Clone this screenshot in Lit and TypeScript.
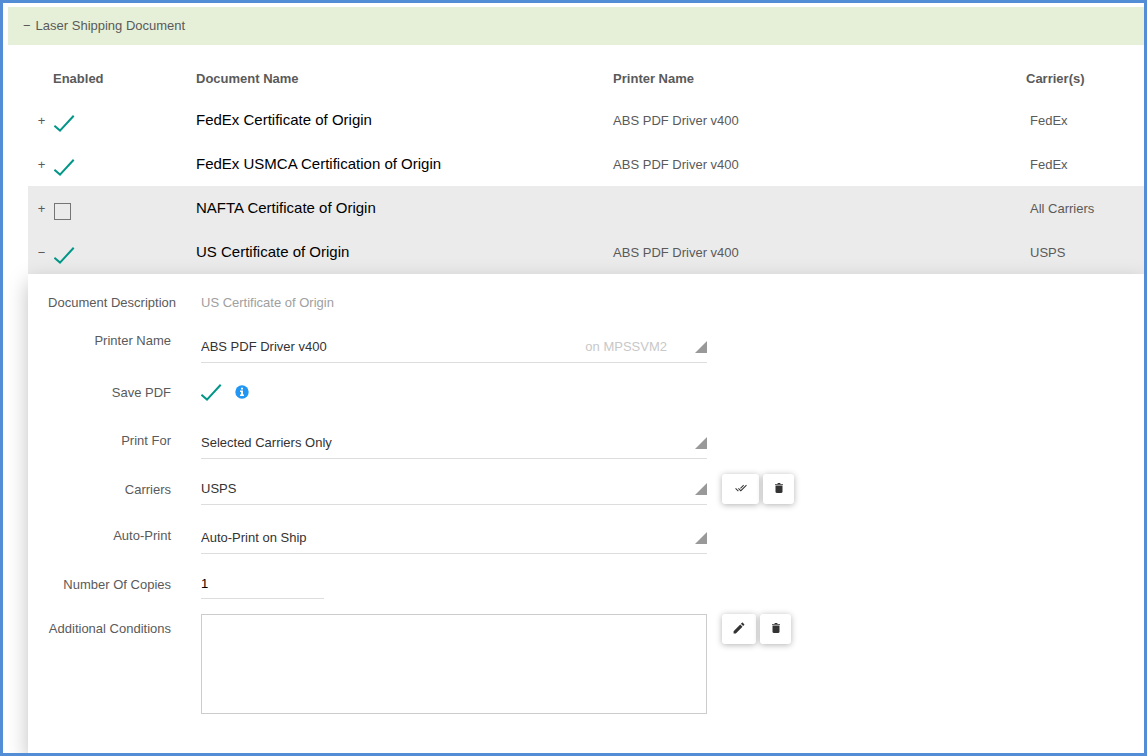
import { LitElement, html, css, svg, nothing } from "lit";
import { customElement, state } from "lit/decorators.js";

interface ShippingDocument {
  name: string;
  printer: string;
  carriers: string;
  enabled: boolean;
  shaded: boolean;
}

const DOCUMENTS: ShippingDocument[] = [
  { name: "FedEx Certificate of Origin", printer: "ABS PDF Driver v400", carriers: "FedEx", enabled: true, shaded: false },
  { name: "FedEx USMCA Certification of Origin", printer: "ABS PDF Driver v400", carriers: "FedEx", enabled: true, shaded: false },
  { name: "NAFTA Certificate of Origin", printer: "", carriers: "All Carriers", enabled: false, shaded: true },
  { name: "US Certificate of Origin", printer: "ABS PDF Driver v400", carriers: "USPS", enabled: true, shaded: true },
];

const trashIcon = svg`<svg class="icon" viewBox="0 0 12 12" aria-hidden="true"><path d="M2 1.900h2.200L5 1h2l.8.9H10v.9H2zM2.500 3.600h7v6.200c0 .7-.5 1.200-1.200 1.200H3.700c-.7 0-1.200-.5-1.200-1.200z"/></svg>`;
const pencilIcon = svg`<svg class="icon" viewBox="2 2 20 20" aria-hidden="true"><path d="M3 17.250V21h3.750L17.810 9.940l-3.750-3.750L3 17.250zM20.710 7.040c.39-.39.39-1.020 0-1.410l-2.340-2.340c-.39-.39-1.020-.39-1.410 0l-1.830 1.830 3.750 3.750 1.830-1.830z"/></svg>`;
const doubleCheckIcon = svg`<svg class="icon" viewBox="0 0 24 24" aria-hidden="true"><path d="M18 7l-1.410-1.410-6.340 6.340 1.410 1.410L18 7zm4.240-1.410L11.660 16.170 7.480 12l-1.410 1.410L11.660 19l12-12-1.420-1.410zM.41 13.410L6 19l1.410-1.410L1.830 12 .41 13.410z"/></svg>`;
const infoIcon = svg`<svg class="info" viewBox="0 0 14 14" role="img" aria-label="Information"><circle cx="7" cy="7" r="6.700" fill="#2196f3"/><path fill="#fff" d="M6 2.700h2v1.800H6zM5 5.600h3v3.900h1V11H5V9.500h1V7H5z"/></svg>`;

@customElement("app-root")
export class AppRoot extends LitElement {
  @state() private openIndex = 3;

  static styles = css`
    :host {
      display: flex;
      flex-direction: column;
      box-sizing: border-box;
      min-height: 100vh;
      padding: 4px 0 0 5px;
      border: 3px solid #538dd5;
      overflow: hidden;
      background: #fff;
      color: #5a5a5a;
      font: 13px/20px "Liberation Sans", Arial, sans-serif;
    }
    button, input, select, textarea {
      box-sizing: border-box;
      margin: 0;
      font: inherit;
      color: inherit;
    }
    .group {
      display: flex;
      align-items: center;
      gap: 5px;
      height: 38px;
      padding: 0 15px;
      border: 0;
      background: #e6f0d8;
      text-align: left;
    }
    .content {
      display: flex;
      flex: 1;
      flex-direction: column;
      margin-left: 20px;
    }
    .documents {
      width: 100%;
      table-layout: fixed;
      border-collapse: collapse;
    }
    .col-enabled { width: 168px; }
    .col-printer { width: 37%; }
    .col-carriers { width: 118px; }
    th {
      height: 38px;
      padding: 15px 0 0;
      text-align: left;
      font-weight: bold;
    }
    .head-enabled { padding-left: 25px; }
    td {
      height: 42px;
      padding: 2px 0 0;
    }
    .carrier { padding-left: 4px; }
    .shaded { background: #ebebeb; }
    .name {
      padding-top: 0;
      color: #000;
      font-size: 15px;
    }
    .toggle {
      display: flex;
      align-items: center;
      padding-left: 8px;
      gap: 7px;
    }
    .expander {
      width: 11px;
      padding: 0;
      border: 0;
      background: none;
    }
    .check {
      appearance: none;
      width: 21px;
      height: 18px;
      background: url("data:image/svg+xml,%3Csvg xmlns='http://www.w3.org/2000/svg' viewBox='0 0 21 18'%3E%3Cpath d='M.4 10.800L6 15.600 19.700.8' fill='none' stroke='%23009688' stroke-width='2'/%3E%3C/svg%3E") no-repeat;
    }
    .check:not(:checked) {
      width: 17px;
      height: 17px;
      border: 1px solid #757575;
      background: none;
    }
    .toggle .check { margin-top: 5px; }
    .panel {
      position: relative;
      display: flex;
      flex: 1;
      flex-direction: column;
      gap: 15px;
      padding: 19px 16px 39px 0;
      background: #fff;
      box-shadow: 0 8px 20px rgba(0, 0, 0, 0.25);
    }
    .row {
      display: grid;
      grid-template-columns: 143px minmax(0, 506px) auto;
      column-gap: 30px;
      align-items: start;
    }
    .row.wide {
      grid-template-columns: 148px minmax(0, 506px);
      column-gap: 25px;
      min-height: 22px;
    }
    .row.close { margin-top: -2px; }
    .label {
      padding-top: 5px;
      text-align: right;
      white-space: nowrap;
    }
    .high .label { padding-top: 1px; }
    .wide .label { padding-top: 0; }
    .low .label { padding-top: 8px; }
    .description { color: #a0a0a0; }
    .field { position: relative; }
    .select {
      display: block;
      width: 100%;
      height: 33px;
      padding: 2px 20px 0 0;
      appearance: none;
      border: 0;
      border-bottom: 1px solid #ddd;
      border-radius: 0;
      background: url("data:image/svg+xml,%3Csvg xmlns='http://www.w3.org/2000/svg' viewBox='0 0 12 12'%3E%3Cpath d='M12 0v12H0z' fill='%23999'/%3E%3C/svg%3E") right 11px / 12px 12px no-repeat;
      color: #333;
    }
    .host {
      position: absolute;
      top: 7px;
      right: 40px;
      color: #c8c8c8;
      pointer-events: none;
    }
    .save {
      display: flex;
      align-items: center;
      gap: 13px;
      padding: 6px 0 9px;
    }
    .info {
      width: 14px;
      height: 14px;
      margin-bottom: 2px;
    }
    .copies {
      display: block;
      width: 123px;
      height: 32px;
      padding: 2px 0 0;
      border: 0;
      border-bottom: 1px solid #ddd;
      color: #000;
    }
    .conditions {
      display: block;
      width: 100%;
      height: 100px;
      resize: none;
      border: 1px solid #ccc;
      outline: 0;
    }
    .actions {
      display: flex;
      gap: 4px;
      margin-left: -15px;
    }
    .low .actions { padding: 2px 0; }
    .action {
      display: flex;
      align-items: center;
      justify-content: center;
      width: 31px;
      height: 30px;
      padding: 0 0 2px;
      border: 0;
      border-radius: 3px;
      background: #fff;
      box-shadow: 0 1px 6px rgba(0, 0, 0, 0.3);
      color: #333;
    }
    .action.edit { width: 34px; }
    .action.all { width: 37px; }
    .icon {
      width: 12px;
      height: 12px;
      fill: currentColor;
    }
  `;

  private renderSelect(id: string, value: string) {
    return html`<select class="select" id=${id}><option>${value}</option></select>`;
  }

  private renderDocument(doc: ShippingDocument, index: number) {
    const open = index === this.openIndex;
    return html`
      <tr class=${doc.shaded ? "shaded" : ""}>
        <td>
          <div class="toggle">
            <button class="expander" aria-expanded=${open} aria-label="Details of ${doc.name}"
              @click=${() => (this.openIndex = open ? -1 : index)}>${open ? "−" : "+"}</button>
            <input class="check" type="checkbox" aria-label="${doc.name} enabled" .checked=${doc.enabled} />
          </div>
        </td>
        <td class="name">${doc.name}</td>
        <td>${doc.printer}</td>
        <td class="carrier">${doc.carriers}</td>
      </tr>`;
  }

  private renderDetails(doc: ShippingDocument) {
    return html`
      <section class="panel">
        <div class="row wide">
          <span class="label">Document Description</span>
          <span class="description">${doc.name}</span>
        </div>
        <div class="row high">
          <label class="label" for="printer">Printer Name</label>
          <div class="field">
            ${this.renderSelect("printer", doc.printer)}
            <span class="host">on MPSSVM2</span>
          </div>
        </div>
        <div class="row">
          <label class="label" for="save">Save PDF</label>
          <div class="save"><input class="check" type="checkbox" id="save" checked />${infoIcon}</div>
        </div>
        <div class="row">
          <label class="label" for="printfor">Print For</label>
          ${this.renderSelect("printfor", "Selected Carriers Only")}
        </div>
        <div class="row close low">
          <label class="label" for="carriers">Carriers</label>
          ${this.renderSelect("carriers", doc.carriers)}
          <div class="actions">
            <button class="action all" aria-label="Select all carriers">${doubleCheckIcon}</button>
            <button class="action" aria-label="Clear carriers">${trashIcon}</button>
          </div>
        </div>
        <div class="row">
          <label class="label" for="autoprint">Auto-Print</label>
          ${this.renderSelect("autoprint", "Auto-Print on Ship")}
        </div>
        <div class="row close low">
          <label class="label" for="copies">Number Of Copies</label>
          <input class="copies" id="copies" type="text" inputmode="numeric" value="1" />
        </div>
        <div class="row">
          <label class="label" for="conditions">Additional Conditions</label>
          <textarea class="conditions" id="conditions"></textarea>
          <div class="actions">
            <button class="action edit" aria-label="Edit conditions">${pencilIcon}</button>
            <button class="action" aria-label="Clear conditions">${trashIcon}</button>
          </div>
        </div>
      </section>`;
  }

  render() {
    const current = DOCUMENTS[this.openIndex];
    return html`
      <button class="group" aria-expanded="true"><span>−</span><span>Laser Shipping Document</span></button>
      <div class="content">
        <table class="documents">
          <colgroup>
            <col class="col-enabled" /><col /><col class="col-printer" /><col class="col-carriers" />
          </colgroup>
          <thead>
            <tr>
              <th class="head-enabled">Enabled</th>
              <th>Document Name</th>
              <th>Printer Name</th>
              <th>Carrier(s)</th>
            </tr>
          </thead>
          <tbody>${DOCUMENTS.map((doc, index) => this.renderDocument(doc, index))}</tbody>
        </table>
        ${current ? this.renderDetails(current) : nothing}
      </div>`;
  }
}
